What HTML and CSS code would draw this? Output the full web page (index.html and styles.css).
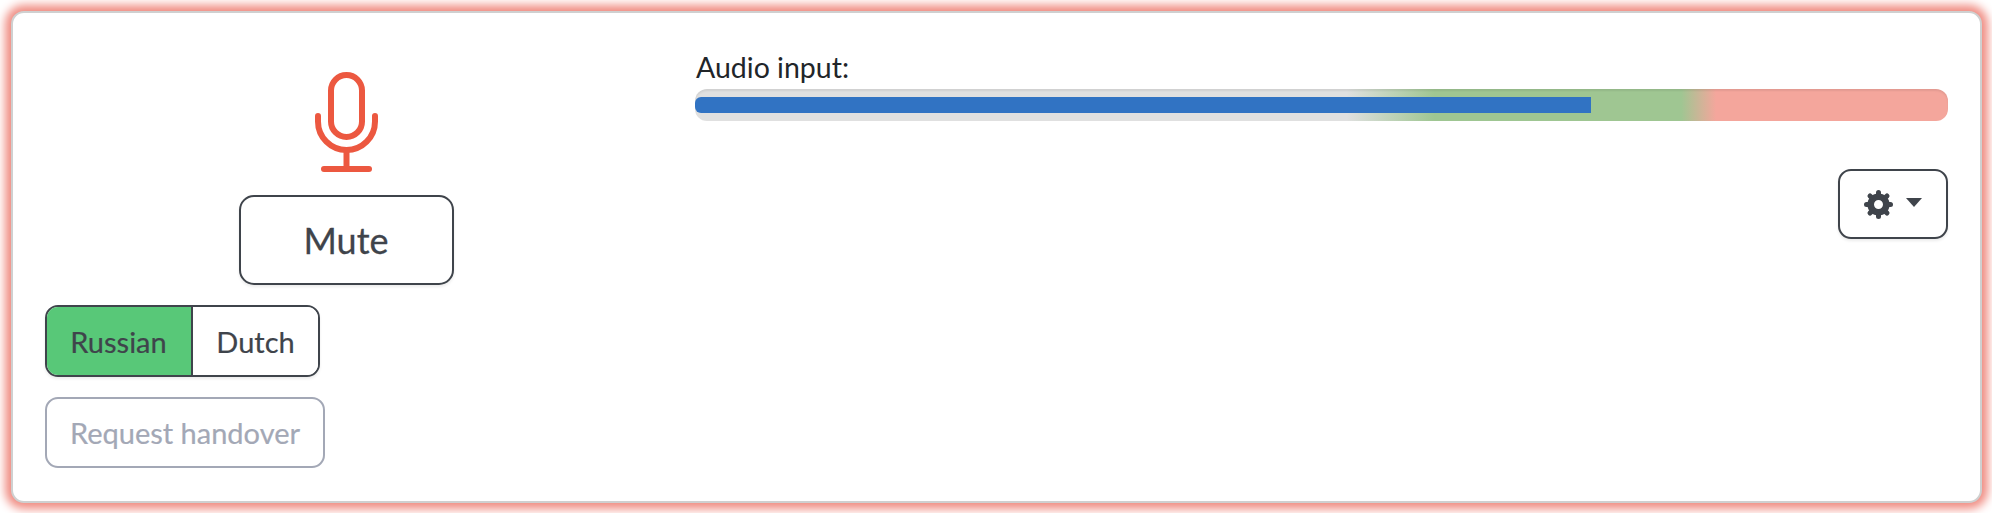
FILE: index.html
```html
<!DOCTYPE html>
<html lang="en">
<head>
<meta charset="utf-8">
<title>Interpreter console</title>
<link rel="stylesheet" href="styles.css">
</head>
<body>
<main class="card">
  <section class="left">
    <div class="mic-block">
      <svg class="mic" width="63" height="100" viewBox="0 0 63 100" fill="none" stroke="#ec5840" stroke-width="6" stroke-linecap="round">
        <rect x="16" y="3" width="31" height="62" rx="15.5"/>
        <path d="M3 44v5.5a28.500 28.500 0 0 0 57 0V44"/>
        <path d="M31.500 78V97" stroke-linecap="butt"/>
        <path d="M9 97H54"/>
      </svg>
      <button class="btn mute">Mute</button>
    </div>
    <div class="lang-group">
      <button class="lang active">Russian</button>
      <button class="lang">Dutch</button>
    </div>
    <button class="btn handover">Request handover</button>
  </section>
  <section class="right">
    <label class="audio-label">Audio input:</label>
    <div class="meter"><div class="level" style="width:71.5%"></div></div>
    <div class="tools">
      <button class="btn settings" aria-label="Settings">
        <svg width="29" height="29" viewBox="0 0 29 29" fill="none" stroke="#3f444b">
          <circle cx="14.500" cy="14.500" r="7.800" stroke-width="6.600"/>
          <g stroke-width="5" stroke-linecap="round">
            <path d="M14.500 2.500V4"/><path d="M14.500 25V26.500"/>
            <path d="M2.500 14.500H4"/><path d="M25 14.500H26.500"/>
            <path d="M6 6L7.100 7.100"/><path d="M21.900 21.900L23 23"/>
            <path d="M23 6L21.900 7.100"/><path d="M7.100 21.900L6 23"/>
          </g>
        </svg>
        <span class="caret"></span>
      </button>
    </div>
  </section>
</main>
</body>
</html>
```
FILE: styles.css
```css
* { box-sizing: border-box; }
html, body { margin: 0; height: 513px; background: #fff; overflow: hidden; }
body { padding: 11px 10px 10px 11px; font-family: Lato, "Liberation Sans", sans-serif; }
.card {
  display: flex;
  height: 492px;
  padding: 0 32px 0 32px;
  gap: 48px;
  background: #fff;
  border: 2px solid #cfd0d0;
  border-radius: 13px;
  box-shadow: 0 0 10px 6px #f08c82;
}
.left { width: 602px; flex: none; display: flex; flex-direction: column; align-items: flex-start; padding-top: 59px; }
.right { flex: 1; display: flex; flex-direction: column; padding-top: 37px; }
.mic-block { align-self: stretch; display: flex; flex-direction: column; align-items: center; }
.mic { display: block; margin-left: 1px; }
.btn {
  display: block;
  background: #fff;
  border: 2px solid #3f444b;
  color: #3f444b;
  font-family: inherit;
  padding: 0;
  box-shadow: 0 2px 3px rgba(0, 0, 0, .08);
}
.mute { width: 215px; height: 90px; margin-top: 23px; border-radius: 15px; font-size: 36px; -webkit-text-stroke: .3px #3f444b; }
.lang-group { display: flex; margin-top: 20px; height: 72px; border: 2px solid #3f444b; border-radius: 13px; overflow: hidden; box-shadow: 0 2px 3px rgba(0, 0, 0, .08); }
.lang { border: 0; background: #fff; color: #3f444b; font: inherit; font-size: 29px; width: 125px; padding: 0; -webkit-text-stroke: .2px #3f444b; }
.lang.active { background: #58c878; border-right: 2px solid #3f444b; width: 146px; padding-right: 1px; }
.handover { width: 280px; height: 71px; margin-top: 20px; border-color: #a3a8b6; border-radius: 13px; color: #a3a8b6; font-size: 29px; box-shadow: none; -webkit-text-stroke: .2px #a3a8b6; }
.audio-label { font-size: 28.500px; line-height: 34px; color: #212529; height: 34px; margin-left: 1px; }
.meter {
  position: relative;
  height: 32px;
  margin-top: 5px;
  padding: 8px 0;
  border-radius: 12px;
  background: linear-gradient(90deg, #e0e0e0 52%, #9fc692 59%, #9fc692 78.700%, #f4a69c 81.500%);
  box-shadow: inset 0 2px 2px rgba(0, 0, 0, .07);
}
.level { height: 16px; background: #3173c3; border-radius: 6px 0 0 6px; }
.tools { display: flex; justify-content: flex-end; margin-top: 48px; }
.settings { display: flex; align-items: center; justify-content: center; gap: 13px; width: 110px; height: 70px; border-radius: 13px; }
.caret { width: 0; height: 0; border: 8px solid transparent; border-top: 9px solid #3f444b; border-bottom: 0; margin-top: -4px; }
```
